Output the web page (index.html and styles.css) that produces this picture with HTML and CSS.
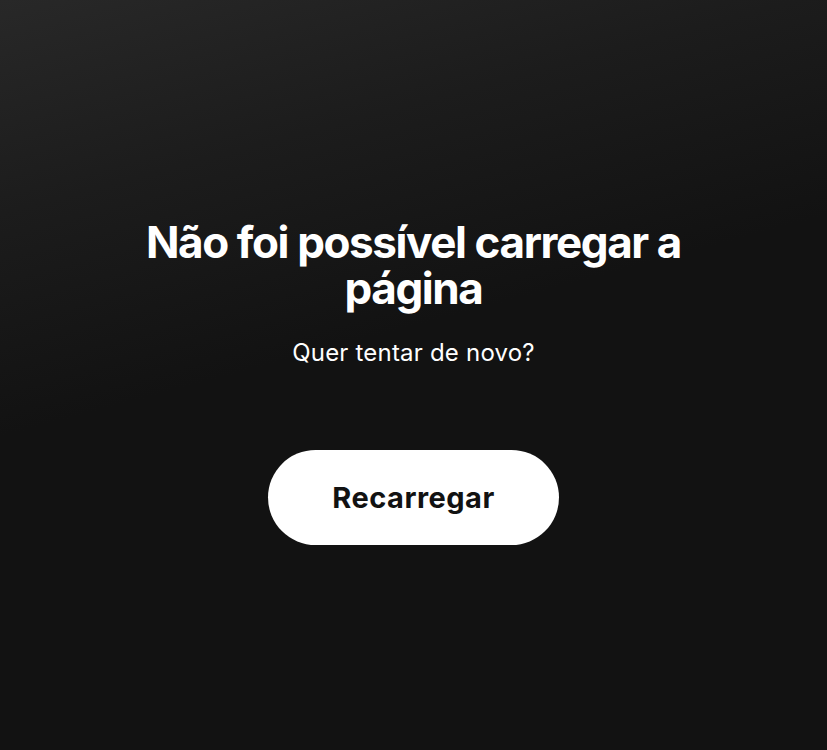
FILE: index.html
```html
<!DOCTYPE html>
<html lang="pt-BR">
<head>
    <meta charset="UTF-8">
    <meta name="viewport" content="width=device-width, initial-scale=1.0">
    <title>Erro ao carregar</title>
    <link rel="stylesheet" href="styles.css">
</head>
<body>

    <!-- Error state shown when the page fails to load -->
    <div class="error-page">
        <h1 class="error-title">Não foi possível carregar a página</h1>
        <p class="error-text">Quer tentar de novo?</p>
        <button class="reload-btn" onclick="location.reload()">Recarregar</button>
    </div>

</body>
</html>
```

FILE: styles.css
```css
/* Page */
html, body {
    height: 100%;
}

body {
    margin: 0;
    font-family: Inter, "Noto Sans", Arial, sans-serif;
    color: #fff;
    background: linear-gradient(165deg, #282828 0%, #1c1c1c 22%, #121212 45%, #121212 100%);
}

/* Centered error block */
.error-page {
    height: 100%;
    display: flex;
    flex-direction: column;
    align-items: center;
    justify-content: center;
    text-align: center;
    padding-top: 13px;
    box-sizing: border-box;
}

.error-title {
    margin: 0;
    max-width: 560px;
    font-size: 44px;
    line-height: 46px;
    font-weight: 700;
    letter-spacing: -1.4px;
}

.error-text {
    margin: 27px 0 0;
    font-size: 24px;
    font-weight: 400;
    letter-spacing: 0.2px;
}

.reload-btn {
    margin-top: 83px;
    width: 291px;
    height: 95px;
    border: none;
    border-radius: 48px;
    background-color: #fff;
    color: #121212;
    font-family: inherit;
    font-size: 29px;
    font-weight: 700;
    letter-spacing: 0.5px;
    cursor: pointer;
}

.reload-btn:hover {
    transform: scale(1.03);
}
```
